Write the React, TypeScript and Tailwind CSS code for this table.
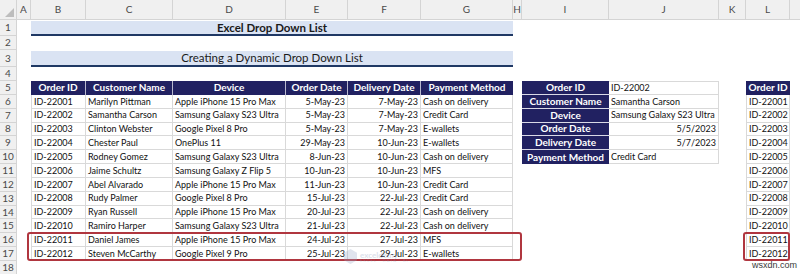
import React from 'react';

type Order = {
  id: string;
  name: string;
  device: string;
  orderDate: string;
  deliveryDate: string;
  payment: string;
};

const orders: Order[] = [
  { id: 'ID-22001', name: 'Marilyn Pittman', device: 'Apple iPhone 15 Pro Max', orderDate: '5-May-23', deliveryDate: '7-May-23', payment: 'Cash on delivery' },
  { id: 'ID-22002', name: 'Samantha Carson', device: 'Samsung Galaxy S23 Ultra', orderDate: '5-May-23', deliveryDate: '7-May-23', payment: 'Credit Card' },
  { id: 'ID-22003', name: 'Clinton Webster', device: 'Google Pixel 8 Pro', orderDate: '5-May-23', deliveryDate: '7-May-23', payment: 'E-wallets' },
  { id: 'ID-22004', name: 'Chester Paul', device: 'OnePlus 11', orderDate: '29-May-23', deliveryDate: '10-Jun-23', payment: 'E-wallets' },
  { id: 'ID-22005', name: 'Rodney Gomez', device: 'Samsung Galaxy S23 Ultra', orderDate: '8-Jun-23', deliveryDate: '10-Jun-23', payment: 'Cash on delivery' },
  { id: 'ID-22006', name: 'Jaime Schultz', device: 'Samsung Galaxy Z Flip 5', orderDate: '10-Jun-23', deliveryDate: '10-Jun-23', payment: 'MFS' },
  { id: 'ID-22007', name: 'Abel Alvarado', device: 'Apple iPhone 15 Pro Max', orderDate: '11-Jun-23', deliveryDate: '10-Jun-23', payment: 'Credit Card' },
  { id: 'ID-22008', name: 'Rudy Palmer', device: 'Google Pixel 8 Pro', orderDate: '15-Jul-23', deliveryDate: '22-Jul-23', payment: 'Credit Card' },
  { id: 'ID-22009', name: 'Ryan Russell', device: 'Apple iPhone 15 Pro Max', orderDate: '20-Jul-23', deliveryDate: '22-Jul-23', payment: 'Cash on delivery' },
  { id: 'ID-22010', name: 'Ramiro Harper', device: 'Samsung Galaxy S23 Ultra', orderDate: '21-Jul-23', deliveryDate: '22-Jul-23', payment: 'Cash on delivery' },
  { id: 'ID-22011', name: 'Daniel James', device: 'Apple iPhone 15 Pro Max', orderDate: '24-Jul-23', deliveryDate: '27-Jul-23', payment: 'MFS' },
  { id: 'ID-22012', name: 'Steven McCarthy', device: 'Google Pixel 9 Pro', orderDate: '25-Jul-23', deliveryDate: '29-Jul-23', payment: 'E-wallets' },
];

// lookup panel (I:J, rows 5-10)
const details: { label: string; value: string; right?: boolean }[] = [
  { label: 'Order ID', value: 'ID-22002' },
  { label: 'Customer Name', value: 'Samantha Carson' },
  { label: 'Device', value: 'Samsung Galaxy S23 Ultra' },
  { label: 'Order Date', value: '5/5/2023', right: true },
  { label: 'Delivery Date', value: '5/7/2023', right: true },
  { label: 'Payment Method', value: 'Credit Card' },
];

const letters = ['A', 'B', 'C', 'D', 'E', 'F', 'G', 'H', 'I', 'J', 'K', 'L'];
const headers = ['Order ID', 'Customer Name', 'Device', 'Order Date', 'Delivery Date', 'Payment Method'];

const hdr = 'flex items-center justify-center bg-[#f0f0f0] border-r border-b border-[#d4d4d4] text-[10px] text-[#4a4a4a]';
const navy = 'flex items-center justify-center bg-[#212161] text-white font-bold text-[10px] whitespace-nowrap overflow-hidden';
const data = 'flex items-center px-[2px] border-r border-b border-[#d9d9d9] text-[9px] text-[#111] whitespace-nowrap overflow-hidden';

const Empty = () => <div />;

const RowNum = ({ n }: { n: number }) => <div className={hdr}>{n}</div>;

export default function App() {
  return (
    <div className="relative w-[800px] h-[274px] overflow-hidden bg-white font-['Lato',sans-serif]">
      <div className="grid grid-cols-[17px_14px_55px_87px_113px_62px_73px_92px_9px_87px_110px_27px_44px_1fr] grid-rows-[20px_16px_14px_17px_14px_repeat(13,13.85px)_14px]">
        {/* column letters */}
        <div className="relative bg-[#f0f0f0] border-r border-b border-[#d4d4d4]">
          <svg className="absolute right-[2px] bottom-[2px]" width="9" height="9" viewBox="0 0 9 9">
            <polygon points="9,0 9,9 0,9" fill="#bdbdbd" />
          </svg>
        </div>
        {letters.map((l) => (
          <div key={l} className={hdr}>{l}</div>
        ))}
        <div className="bg-[#f0f0f0] border-b border-[#d4d4d4]" />

        {/* row 1 */}
        <RowNum n={1} />
        <Empty />
        <div className="col-span-6 flex items-center justify-center mt-px bg-[#dae3f3] border-b-2 border-[#1f3864] text-[11.5px] font-bold text-[#1a1a1a]">
          Excel Drop Down List
        </div>
        <Empty /><Empty /><Empty /><Empty /><Empty /><Empty />

        {/* row 2 */}
        <RowNum n={2} />
        <Empty /><Empty /><Empty /><Empty /><Empty /><Empty /><Empty /><Empty /><Empty /><Empty /><Empty /><Empty /><Empty />

        {/* row 3 */}
        <RowNum n={3} />
        <Empty />
        <div className="col-span-6 flex items-center justify-center mt-px bg-[#dae3f3] border-b-2 border-[#1f3864] text-[11.5px] text-[#1a1a1a]">
          Creating a Dynamic Drop Down List
        </div>
        <Empty /><Empty /><Empty /><Empty /><Empty /><Empty />

        {/* row 4 */}
        <RowNum n={4} />
        <Empty /><Empty /><Empty /><Empty /><Empty /><Empty /><Empty /><Empty /><Empty /><Empty /><Empty /><Empty /><Empty />

        {/* row 5: headers */}
        <RowNum n={5} />
        <Empty />
        {headers.map((h, i) => (
          <div key={h} className={`${navy} ${i < 5 ? 'border-r border-[#b9b9cf]' : ''}`}>{h}</div>
        ))}
        <Empty />
        <div className={`${navy} border-b border-[#d9d9e6]`}>{details[0].label}</div>
        <div className={`${data} border-t`}>{details[0].value}</div>
        <Empty />
        <div className={navy}>Order ID</div>
        <Empty />

        {/* rows 6-17 */}
        {orders.map((o, i) => {
          const d = details[i + 1];
          return (
            <React.Fragment key={o.id}>
              <RowNum n={i + 6} />
              <Empty />
              <div className={`${data} border-l`}>{o.id}</div>
              <div className={data}>{o.name}</div>
              <div className={data}>{o.device}</div>
              <div className={`${data} justify-end`}>{o.orderDate}</div>
              <div className={`${data} justify-end`}>{o.deliveryDate}</div>
              <div className={data}>{o.payment}</div>
              <Empty />
              {d ? (
                <div className={`${navy} ${i < 4 ? 'border-b border-[#d9d9e6]' : ''}`}>{d.label}</div>
              ) : (
                <Empty />
              )}
              {d ? (
                <div className={`${data} ${d.right ? 'justify-end' : ''}`}>{d.value}</div>
              ) : (
                <Empty />
              )}
              <Empty />
              <div className={`${data} border-l`}>{o.id}</div>
              <Empty />
            </React.Fragment>
          );
        })}

        {/* row 18 */}
        <RowNum n={18} />
      </div>

      {/* highlight boxes */}
      <div className="absolute left-[27px] top-[232px] w-[495px] h-[29px] rounded-[3px] border-2 border-[#b0363f]" />
      <div className="absolute left-[743px] top-[232px] w-[47px] h-[29px] rounded-[3px] border-2 border-[#b0363f]" />

      {/* faint watermark */}
      <div className="absolute left-[344px] top-[249px] flex items-center gap-[3px] opacity-30">
        <svg width="13" height="15" viewBox="0 0 14 16">
          <polygon points="7,0 14,4 14,12 7,16 0,12 0,4" fill="#9aa8c8" />
        </svg>
        <div className="flex flex-col leading-none">
          <span className="text-[8px] font-bold text-[#8c9bbd]">exceldemy</span>
          <span className="text-[4px] tracking-[1px] text-[#8c9bbd]">EXCEL · DATA · BI</span>
        </div>
      </div>
      <div className="absolute right-[3px] bottom-[2px] text-[9px] text-[#3a3a3a] font-['Liberation_Sans',sans-serif]">wsxdn.com</div>
    </div>
  );
}
